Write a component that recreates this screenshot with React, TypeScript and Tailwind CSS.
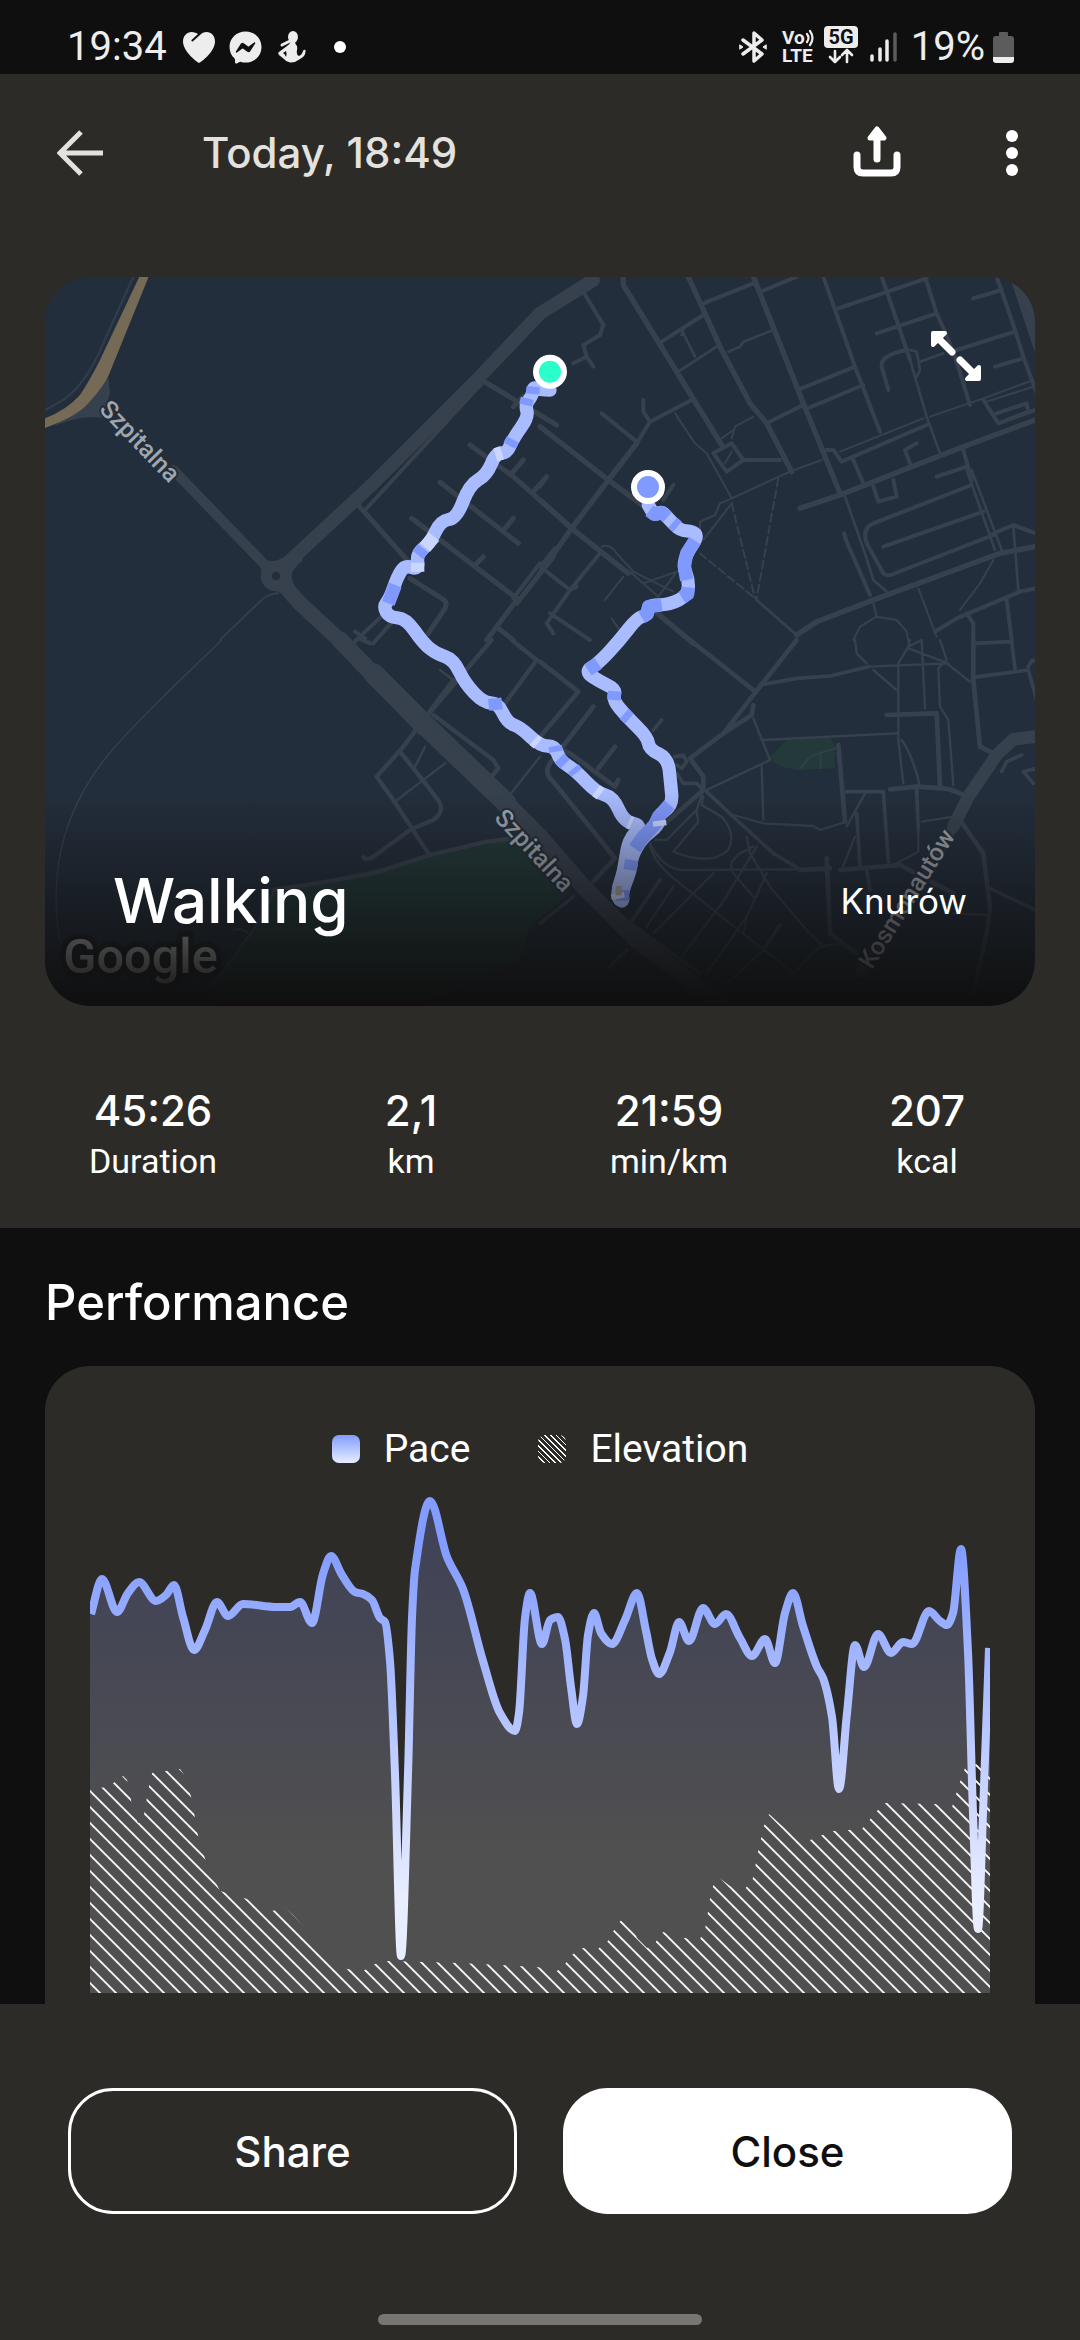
import React from 'react'
import { FaFacebookMessenger } from 'react-icons/fa6'

type Point = [number, number]

const stats = [
  { value: '45:26', label: 'Duration' },
  { value: '2,1', label: 'km' },
  { value: '21:59', label: 'min/km' },
  { value: '207', label: 'kcal' },
]

const PLOT_WIDTH = 900
const PLOT_HEIGHT = 498

const pace: Point[] = [
  [1, 119], [12, 84], [27, 117], [38, 98], [49, 87], [66, 106], [76, 100], [84, 90], [93, 122], [104, 155],
  [115, 135], [127, 107], [138, 121], [153, 109], [187, 112], [200, 112], [210, 107], [222, 128], [233, 79], [241, 61],
  [252, 80], [265, 97], [273, 99], [282, 105], [290, 123], [295, 127], [300, 166], [305, 279], [311, 461], [318, 279],
  [322, 123], [325, 75], [340, 6], [357, 62], [373, 94], [393, 166], [410, 218], [425, 236], [429, 218], [435, 123],
  [440, 98], [452, 149], [460, 125], [468, 122], [475, 144], [481, 192], [487, 229], [493, 201], [498, 140], [504, 118],
  [511, 138], [522, 149], [535, 125], [547, 98], [556, 136], [562, 164], [569, 179], [580, 157], [589, 127], [599, 146],
  [613, 113], [625, 129], [636, 119], [650, 143], [662, 161], [675, 144], [685, 168], [695, 118], [703, 98], [713, 131],
  [727, 172], [733, 183], [742, 222], [749, 294], [757, 218], [765, 150], [774, 172], [788, 139], [801, 158], [813, 147],
  [822, 149], [839, 116], [850, 126], [857, 130], [863, 118], [871, 54], [878, 157], [883, 318], [888, 434], [893, 318],
  [899, 153],
]

const elevation: Point[] = [
  [0, 294], [18, 292], [33, 281], [37, 285], [43, 315], [48, 328], [53, 326], [58, 296], [62, 278], [90, 274],
  [95, 281], [102, 305], [108, 341], [117, 370], [130, 396], [157, 404], [183, 416], [193, 411], [203, 420], [217, 435],
  [233, 452], [243, 469], [257, 474], [273, 476], [285, 469], [298, 466], [370, 468], [447, 472], [467, 476], [475, 469],
  [483, 459], [492, 453], [508, 454], [518, 446], [528, 428], [538, 420], [547, 443], [557, 453], [565, 448], [573, 437],
  [593, 443], [610, 444], [615, 435], [620, 404], [623, 391], [628, 382], [640, 391], [655, 394], [663, 383], [668, 357],
  [674, 331], [679, 319], [690, 329], [713, 348], [730, 341], [743, 336], [758, 335], [772, 334], [787, 316], [795, 308],
  [845, 309], [862, 312], [870, 287], [875, 273], [887, 269], [900, 279],
]

const route: Point[] = [
  [1530, 360], [1500, 360], [1480, 350], [1478, 375], [1455, 405], [1466, 440], [1420, 505], [1400, 550], [1368, 548],
  [1340, 615], [1288, 645], [1250, 745], [1202, 752], [1170, 820], [1130, 850], [1136, 900], [1095, 885], [1072, 920],
  [1050, 985], [1030, 1010], [1048, 1042], [1098, 1045], [1150, 1120], [1190, 1152], [1240, 1168], [1275, 1240],
  [1330, 1298], [1375, 1300], [1402, 1358], [1442, 1372], [1500, 1428], [1545, 1428], [1560, 1472], [1605, 1500],
  [1670, 1568], [1720, 1582], [1752, 1655], [1805, 1665], [1775, 1700], [1762, 1730], [1750, 1810], [1735, 1850],
  [1733, 1885], [1750, 1897], [1745, 1870], [1772, 1800], [1775, 1760], [1805, 1705], [1858, 1665], [1850, 1640],
  [1898, 1605], [1892, 1540], [1884, 1465], [1828, 1438], [1822, 1400], [1760, 1340], [1718, 1290], [1728, 1258],
  [1680, 1235], [1634, 1205], [1675, 1180], [1740, 1110], [1790, 1045], [1824, 1034], [1824, 1005], [1890, 1004],
  [1944, 975], [1946, 930], [1930, 890], [1940, 850], [1974, 800], [1958, 783], [1920, 782], [1885, 745], [1865, 724],
  [1843, 737], [1825, 705],
]

const fastSegments =
  'M1480 350L1478 372M1462 385L1457 405M1418 508L1408 527M1150 835L1134 855M1066 945L1045 1000M1364 1285L1368 1320M1545 1428L1548 1445M1558 1465L1575 1482M1610 1508L1600 1495M1770 1800L1775 1770M1748 1860L1748 1892M1784 1735L1808 1702L1843 1665L1856 1640L1888 1604M1722 1290L1724 1264M1768 1346L1752 1332M1644 1200L1674 1180M1805 1042L1822 1032L1826 1010L1865 1005M1926 983L1943 972L1945 952M1940 930L1933 890L1940 850L1965 812M1828 722L1843 733L1866 728L1882 742M1898 758L1912 770'

const slowSegments =
  'M1386 549L1366 555M1182 800L1155 832M1133 878L1133 905M1494 1420L1482 1410M1668 1562L1682 1572M1766 1656L1775 1660M1858 1652L1860 1668M1732 1870L1735 1886'

// Monotone cubic interpolation, so peaks never overshoot the samples
function smoothPath(points: Point[]) {
  const slopes = points.slice(1).map(([x, y], i) => (y - points[i][1]) / (x - points[i][0]))
  const tangents = points.map((_, i) => {
    if (i === 0) return slopes[0]
    if (i === points.length - 1) return slopes[i - 1]
    const a = slopes[i - 1]
    const b = slopes[i]
    return a * b <= 0 ? 0 : (2 * a * b) / (a + b)
  })
  let d = `M${points[0][0]} ${points[0][1]}`
  for (let i = 1; i < points.length; i++) {
    const [x0, y0] = points[i - 1]
    const [x1, y1] = points[i]
    const h = (x1 - x0) / 3
    d += `C${x0 + h} ${y0 + tangents[i - 1] * h} ${x1 - h} ${y1 - tangents[i] * h} ${x1} ${y1}`
  }
  return d
}

// Rounds the corners by running through the middle of every leg
function roundedPath(points: Point[]) {
  let d = `M${points[0][0]} ${points[0][1]}`
  for (let i = 1; i < points.length - 1; i++) {
    const [x, y] = points[i]
    const [nx, ny] = points[i + 1]
    d += `Q${x} ${y} ${(x + nx) / 2} ${(y + ny) / 2}`
  }
  const [lx, ly] = points[points.length - 1]
  return d + `L${lx} ${ly}`
}

// Streets are grouped per map tile, every entry is one stroke width
const tiles = [
  {
    origin: 'translate(-15 -21)',
    streets: [
      { width: 30, d: 'M400 600L680 890' },
      { width: 40, d: 'M720 900L1000 640L1310 330L1500 130L1660 30' },
      { width: 46, d: 'M735 950L780 1000L920 1130' },
      { width: 12, d: 'M1330 335L975 720M1045 1020L960 1100M1070 1040L1000 1120M945 1085L975 1105M1500 880L1420 985' },
      {
        width: 15,
        d: 'M950 700L1110 880M1110 925L1205 985Q1225 995 1215 1015L1165 1090M1325 330L1550 465M1420 410L1450 380M1290 525L1420 620L1590 770M1415 610L1450 570M1520 620L1480 665M1200 637L1435 820M1395 775L1420 745M1115 745L1430 985M1305 885L1330 860M1430 1000L1540 860M1430 990L1340 1110M1375 1075L1420 1110',
      },
      { width: 5, d: 'M540 1110L670 985Q690 970 715 970' },
    ],
  },
  {
    origin: 'translate(1485 -21)',
    streets: [
      {
        width: 16,
        d: 'M250 20L250 45L545 525M445 20L540 230L630 400L680 460L755 605M640 20L790 400L900 670M0 470L205 630L320 715M0 690L95 775L265 910M290 520L205 630L95 775L0 910M770 1095L830 1055L1000 990L1380 850L1485 830M780 715L900 675L1090 600L1270 530L1500 445M340 1020L460 1120',
      },
      {
        width: 12,
        d: 'M365 215L490 135M490 100L640 40M670 62L770 20M785 355L945 290M810 412L970 345M680 460L790 405M330 455L455 390M290 520L330 455L310 425L310 390M185 430L290 515M850 20L945 290L1020 485M1010 190L1190 130M895 115L1160 25M1155 20L1190 130L1215 185L1245 260L1290 405M1250 240L1425 185M1100 240Q1020 255 1025 290L1045 360M1370 20L1425 180L1450 260L1490 370M1300 85L1385 60M1365 290L1450 265M1025 20L1080 180L1110 270M130 65L190 165L180 195L130 225L140 260L160 290M140 260L100 280M400 645L370 690M180 850L90 960L20 1060L40 1090M110 950L90 960L20 905M30 1030L150 1110M20 620L0 650M0 890L45 835',
      },
      {
        width: 12,
        d: 'M860 540L880 540L905 575L1160 465M1330 390L1375 460L1485 420M1370 430L1460 400L1465 425L1400 450M940 570L970 640M1110 580L1095 540L1130 520M1190 620L1280 590M1270 540L1295 630M1000 650L1015 695L1070 680L1060 630M1295 645L1000 760Q965 775 980 820L1030 910Q1040 920 1060 912L1360 795M1030 830L1330 725M912 790L920 815L990 975M1350 795L1420 765L1500 795M1185 1085L1250 1045L1440 965L1485 955M1280 1030L1300 1060L1300 1110M1400 990L1415 1110M520 550L575 520L610 570L560 605ZM610 570L720 570',
      },
      {
        width: 8,
        d: 'M1295 600L1385 840M1280 600L1365 840M1140 275L1210 250M1110 240L1130 245L1140 300L1130 320M1110 270L1160 440L1200 550M425 180L465 260M430 180L425 195M415 305L530 230M565 245L600 230L610 215L700 180M915 680L975 850L1000 930L1040 965M1420 770L1435 960M650 990L770 1095',
      },
      {
        width: 6,
        d: 'M405 430L465 520L500 550L575 685L540 700L525 735L480 755L480 780M575 685L750 605L845 570M575 700L490 810M545 505L580 480M575 505L585 470L640 440M555 580L575 545M900 545L1150 445M1170 440L1330 385L1480 330M1340 395L1480 350M1360 870L1320 940L1260 1020M1135 955L1190 1100M1000 1000L1010 1040L1070 1050L1100 1085L1105 1115M1010 1040L960 1070L940 1110M185 830Q210 820 230 850L280 905L400 965M250 920L195 990M410 905L310 940M410 905L355 980L270 905M215 1045L235 1075',
      },
      { width: 40, d: 'M1430 20L1510 260' },
    ],
  },
  {
    origin: 'translate(-15 1089)',
    streets: [
      { width: 52, d: 'M900 0L1150 260' },
      { width: 62, d: 'M1000 100L1150 250L1400 490' },
      { width: 50, d: 'M1380 470L1500 590L1630 740L1790 900L1960 1030L2050 1100' },
      {
        width: 13,
        d: 'M1240 120L1090 320L1010 410L1060 480L1165 640M1080 335L1140 410L1190 475Q1220 510 1180 540L1110 570L1000 650Q975 665 970 650M1355 0L1150 240M1415 0L1490 60L1395 190M1180 225L1360 360L1375 385L1350 415M930 20L955 -5L990 10M700 750L830 730L1000 700L1170 645L1340 605L1420 595',
      },
      { width: 7, d: 'M1155 320L1125 380M1215 370L1065 485M1200 90L1240 120M1405 470L1500 350M700 760L640 870L515 1040M580 870Q610 860 630 885' },
      { width: 4, d: 'M545 0L400 140C250 290 150 380 90 540C50 640 35 780 62 910' },
    ],
  },
  {
    origin: 'translate(1485 1089)',
    streets: [
      { width: 38, d: 'M1500 288L1420 298L1370 345L1285 470L1240 560' },
      { width: 30, d: 'M1240 560L1100 800L960 1000' },
      {
        width: 14,
        d: 'M450 0L640 150M770 0L660 140L550 280L450 355L490 410L490 450L330 590M640 195L635 225L550 280M0 65L115 155L0 290M160 200L30 370Q10 400 40 425L225 655L150 735M0 300L90 340L225 440L235 420M175 385L225 320M1040 225L1190 220L1200 440M895 315L915 545M1050 448L1130 440L1210 445Q1250 450 1285 475M780 690L870 685M900 690L1080 675L1240 760M860 655L870 880L950 940M1300 0L1300 120L1320 320L1370 345M1260 540L1330 640L1350 800L1340 880L1300 1060',
      },
      {
        width: 11,
        d: 'M660 135L770 115L870 108L985 80M340 270L365 240M920 455L1030 455L1045 665M1130 450L1135 570M950 520L960 680M980 690L990 750M1300 10L1415 5L1425 85M1300 112L1465 90L1490 180M1465 80L1475 62L1500 60M1385 395L1400 365L1445 345M1490 385L1450 395L1480 430M1350 745L1490 812M500 455L590 540L700 640L775 685M360 720L270 850L480 1000M405 350L430 345L440 365L425 385L410 375M410 400L430 430L470 430L490 450M260 930L210 980M100 770L0 850M720 855L670 930',
      },
      {
        width: 7,
        d: 'M985 80L1220 70L1290 125M1110 0L1105 20L1075 70L1075 300L1090 430M1145 0L1155 205M1200 0L1220 60L1195 85L1200 200L1225 240L1240 435M1105 25L1225 70M1105 20L1145 0M945 0L950 40L980 70M1000 90L1070 150M665 300L1070 280M640 235L690 360M665 380L670 540M500 450L690 360M1085 300Q1120 350 1140 440M975 460L920 560M945 590L905 690M1135 570L1135 635L1070 670M580 525L670 550L820 558L840 570L920 545M490 470L485 495L545 530Q590 580 565 630Q510 680 400 635L475 545L470 515M490 450L470 510L410 570L380 600L345 600M330 610Q370 690 430 690L780 688M330 620Q350 680 420 730L620 890L700 950L760 1000L840 920L900 910M620 590L630 640L690 740L800 870L850 920M640 620L600 640Q560 670 580 700L640 770M680 700L620 830L610 880M400 740L320 860M520 700L340 880M560 770L410 970M620 830L500 1000M650 620L540 800M670 930L560 1030M1240 530L1145 545M1240 820L1340 825',
      },
    ],
  },
]

function ActivityMap() {
  return (
    <svg viewBox="0 0 2970 2187" className="block w-full h-auto" role="img" aria-label="Route map">
      <rect width="2970" height="2187" fill="#232e3c" />
      <g transform="translate(-15 1089)" fill="#23393a">
        <path d="M720 750L1160 650L1420 595L1500 660L1590 760L1470 860L1440 960L1100 1110L510 1110L520 1020L640 870L700 760Z" />
        <path d="M2190 350L2240 300L2370 290L2385 320L2385 385L2270 390Q2200 380 2190 350Z" />
      </g>
      <g fill="none" stroke="#37414e" strokeLinecap="round" strokeLinejoin="round">
        {tiles.map((tile) => (
          <g key={tile.origin} transform={tile.origin}>
            {tile.streets.map((street) => (
              <path key={street.d} d={street.d} strokeWidth={street.width} />
            ))}
          </g>
        ))}
        <g transform="translate(1485 -21)" strokeWidth="6" strokeDasharray="24 12">
          <path d="M575 700L645 985M715 625L650 985M480 850L645 985" />
        </g>
        <path transform="translate(1485 1089)" d="M780 385L810 350L885 325M842 335L842 385" stroke="#2d4247" strokeWidth="6" />
      </g>

      {/* Main road and the roundabout */}
      <g transform="translate(-15 -21)">
        <path d="M205 320L210 370L195 420L205 450Q150 425 40 468L120 410Z" fill="#37414e" />
        <path d="M280 20L190 220Q140 340 70 390L15 420" fill="none" stroke="#303c49" strokeWidth="7" />
        <path d="M298 20L326 20L205 318Q190 350 145 400Q110 440 15 474L15 445Q80 420 120 375Q150 330 180 270Z" fill="#756a56" />
        <path d="M640 845Q680 880 708 872Q745 860 770 830L790 870Q745 905 757 930Q770 975 810 1010L770 1000Q740 970 705 962Q665 955 667 915Q660 880 640 845Z" fill="#37414e" />
        <circle cx="708" cy="918" r="46" fill="#37414e" />
        <circle cx="708" cy="918" r="13" fill="#232e3c" />
      </g>

      <g
        fill="#a1a6ac"
        stroke="#232e3c"
        strokeWidth="12"
        paintOrder="stroke"
        fontSize="74"
        fontWeight="500"
        className="font-[Roboto,sans-serif]"
      >
        <text transform="translate(160 400) rotate(46)">Szpitalna</text>
        <text transform="translate(1345 1625) rotate(47)">Szpitalna</text>
        <text transform="translate(2480 2080) rotate(-58)">Kosmonautów</text>
      </g>

      <g transform="translate(-15 -21)" fill="none" strokeWidth="40">
        <path d={roundedPath(route)} stroke="#a9bcff" strokeLinecap="round" strokeLinejoin="round" />
        <path d={fastSegments} stroke="#8099ff" strokeLinejoin="round" />
        <path d={slowSegments} stroke="#cbd6ff" />
        <path d="M1736 1848L1736 1876" stroke="#a5a5a0" strokeWidth="18" />
      </g>
      <g transform="translate(-15 -21)" stroke="#ffffff" strokeWidth="18">
        <circle cx="1530" cy="305" r="42" fill="#2bfdcb" />
        <circle cx="1824" cy="651" r="42" fill="#819aff" />
      </g>

      <text
        x="55"
        y="2088"
        fontSize="146"
        fontWeight="500"
        fill="#c8c8c8"
        stroke="#151515"
        strokeOpacity="0.6"
        strokeWidth="34"
        strokeLinejoin="round"
        paintOrder="stroke"
        className="font-[Roboto,sans-serif]"
      >
        Google
      </text>
    </svg>
  )
}

function PerformanceChart() {
  const pacePath = smoothPath(pace)
  const elevationPath = elevation.map(([x, y]) => `${x} ${y}`).join('L')

  return (
    <svg
      viewBox={`0 0 ${PLOT_WIDTH} ${PLOT_HEIGHT}`}
      className="block w-full h-auto mt-[22px]"
      role="img"
      aria-label="Pace and elevation chart"
    >
      <defs>
        <linearGradient id="paceLine" gradientUnits="userSpaceOnUse" x1="0" y1="50" x2="0" y2="400">
          <stop offset="0" stopColor="#829cff" />
          <stop offset="1" stopColor="#e8edff" />
        </linearGradient>
        <linearGradient id="paceArea" gradientUnits="userSpaceOnUse" x1="0" y1="30" x2="0" y2="360">
          <stop offset="0" stopColor="#404257" />
          <stop offset="1" stopColor="#505050" />
        </linearGradient>
        <pattern id="hatch" width="16" height="16" patternUnits="userSpaceOnUse">
          <path d="M-2 6L10 18M6 -2L18 10" stroke="#ffffff" strokeWidth="1.8" />
        </pattern>
      </defs>
      <path d={`${pacePath}L900 153L900 ${PLOT_HEIGHT}L0 ${PLOT_HEIGHT}L0 119Z`} fill="url(#paceArea)" />
      <path d={`M${elevationPath}L${PLOT_WIDTH} ${PLOT_HEIGHT}L0 ${PLOT_HEIGHT}Z`} fill="url(#hatch)" />
      <path d={pacePath} fill="none" stroke="url(#paceLine)" strokeWidth="8" strokeLinejoin="round" />
    </svg>
  )
}

function StatusBar() {
  return (
    <div className="flex h-[74px] items-center justify-between bg-[#0f0f0f] pt-5 pl-[67px] pr-[66px] text-[#ededed]">
      <div className="flex items-center">
        <span className="font-[Roboto,sans-serif] text-[40px] leading-[48px]">19:34</span>
        <svg viewBox="0 0 32 31" className="ml-4 h-[31px] w-8" fill="currentColor">
          <path d="M16 31C12.500 29 0 19 0 9.500C0 4 4 0 8.500 0C11.500 0 13.500 1 15 2L8.500 8C8 8.800 9 9.800 10 9.200L17 3C18.500 1 21 0 23.500 0C28.500 0 32 4 32 9.500C32 19 20 29 16 31Z" />
        </svg>
        <FaFacebookMessenger className="ml-[14px] h-[33px] w-[33px]" />
        <svg viewBox="0 0 28 32" className="ml-4 h-8 w-7" fill="currentColor">
          <ellipse cx="15" cy="6" rx="5" ry="6" />
          <path d="M12 10L4 14" stroke="currentColor" strokeWidth="3" strokeLinecap="round" />
          <path
            fillRule="evenodd"
            d="M13 10L17 10L17.500 13Q20 15 19 19Q18 24 21 25Q24 24 25 20Q26 18 27.500 19Q28 25 22 28Q17 32 12 31.500Q8 31 6 28L1 24Q-0.500 22 1 21L9 15Q12 13 13 10ZM5 22Q7 23 8 26Q9 23 8 20Z"
          />
        </svg>
        <span className="ml-7 h-3 w-3 rounded-full bg-white" />
      </div>

      <div className="flex items-center">
        <svg viewBox="0 0 28 32" className="h-8 w-7" fill="none" stroke="currentColor" strokeWidth="3.500" strokeLinecap="round" strokeLinejoin="round">
          <path d="M4 9L23 23L15 30L15 2L23 9L4 23" />
          <path d="M1 14L4 16L1 18ZM27 14L24 16L27 18Z" fill="currentColor" strokeWidth="1" />
        </svg>
        <svg viewBox="-2 -5 36 44" className="ml-[13px] h-11 w-9" fill="currentColor">
          <g fontSize="19" fontWeight="700" className="font-[Roboto,sans-serif]">
            <text x="0" y="14">Vo</text>
            <text x="0" y="32">LTE</text>
          </g>
          <path d="M25 4Q28 8 25 12M28 1Q33 8 28 15" fill="none" stroke="currentColor" strokeWidth="2.200" strokeLinecap="round" />
        </svg>
        <svg viewBox="0 0 34 38" className="ml-2 mb-1 h-[38px] w-[34px]">
          <rect width="34" height="22" rx="4" fill="#ededed" />
          <text x="17" y="18" textAnchor="middle" fontSize="20" fontWeight="700" fill="#0f0f0f" className="font-[Roboto,sans-serif]">
            5G
          </text>
          <path d="M11 25L11 36M6 31L11 36L16 31M23 36L23 25M18 29L23 24L28 29" fill="none" stroke="#ededed" strokeWidth="2.600" strokeLinecap="round" strokeLinejoin="round" />
        </svg>
        <svg viewBox="0 0 27 30" className="ml-3 h-[30px] w-[27px]" strokeWidth="3.500" strokeLinecap="round" stroke="#ededed">
          <path d="M2 24L2 28M10 17L10 28M17 9L17 28" />
          <path d="M25 2L25 28" stroke="#5c5c5c" />
        </svg>
        <span className="ml-[14px] font-[Roboto,sans-serif] text-[40px] leading-[48px]">19%</span>
        <svg viewBox="0 0 21 31" className="ml-2 h-[31px] w-[21px]">
          <path d="M6 1Q6 0 7 0L14 0Q15 0 15 1L15 4L18 4Q21 4 21 7L21 26L0 26L0 7Q0 4 3 4L6 4Z" fill="#5c5c5c" />
          <path d="M0 25L21 25L21 28Q21 31 18 31L3 31Q0 31 0 28Z" fill="#ededed" />
        </svg>
      </div>
    </div>
  )
}

function App() {
  return (
    <div className="flex min-h-screen flex-col bg-[#0f0f0f] font-[Inter,sans-serif] text-white">
      <StatusBar />

      <section className="bg-[#2d2b28]">
        {/* Toolbar */}
        <header className="flex h-[158px] items-center pl-[57px] pr-[56px]">
          <button aria-label="Back" className="text-[#e4e2de]">
            <svg viewBox="0 0 46 46" className="h-[46px] w-[46px]" fill="none" stroke="currentColor" strokeWidth="5">
              <path d="M24 2L3 23L24 44M4 23L46 23" />
            </svg>
          </button>
          <h1 className="ml-[99px] flex-1 text-[42px] leading-[50px] font-medium text-[#e4e2de]">Today, 18:49</h1>
          <button aria-label="Export">
            <svg viewBox="0 0 48 52" className="mb-1 h-[52px] w-12" fill="none" stroke="#ffffff" strokeWidth="7" strokeLinecap="round" strokeLinejoin="round">
              <path d="M4 30L4 42Q4 48 10 48L38 48Q44 48 44 42L44 30M24 12L24 34" />
              <path d="M24 4L31 13L17 13Z" fill="#ffffff" strokeWidth="5" />
            </svg>
          </button>
          <button aria-label="More options" className="ml-[99px]">
            <svg viewBox="0 0 24 48" className="h-12 w-6" fill="#ffffff">
              <circle cx="12" cy="7" r="6" />
              <circle cx="12" cy="24" r="6" />
              <circle cx="12" cy="41" r="6" />
            </svg>
          </button>
        </header>

        {/* Map card */}
        <div className="px-[45px] pt-[45px]">
          <div className="relative overflow-hidden rounded-[45px]">
            <ActivityMap />
            <div className="absolute inset-x-0 bottom-0 flex h-[214px] items-end justify-between bg-linear-to-b from-[#0f0f0f]/0 to-[#0f0f0f] px-[68px] pb-[65px]">
              <h2 className="text-[62px] leading-[80px] font-medium">Walking</h2>
              <p className="text-[35px] leading-[80px]">Knurów</p>
            </div>
            <button aria-label="Expand map" className="absolute top-[43px] right-[43px]">
              <svg viewBox="0 0 72 72" className="h-[72px] w-[72px]" fill="#ffffff" stroke="#ffffff" strokeWidth="4" strokeLinecap="round" strokeLinejoin="round">
                <path d="M13 13L25 13L13 25ZM59 59L59 47L47 59Z" />
                <path d="M20 20L32 32M40 40L52 52" strokeWidth="7" />
              </svg>
            </button>
          </div>
        </div>

        {/* Summary */}
        <dl className="grid grid-cols-4 px-6 pt-20 pb-[42px] text-center">
          {stats.map((stat) => (
            <div key={stat.label} className="flex flex-col-reverse">
              <dt className="font-[Roboto,sans-serif] text-[34px] leading-[50px]">{stat.label}</dt>
              <dd className="text-[42px] leading-[50px] font-medium">{stat.value}</dd>
            </div>
          ))}
        </dl>
      </section>

      {/* Performance */}
      <section className="flex flex-1 flex-col px-[45px] pt-[45px]">
        <h2 className="text-[49px] leading-[60px] font-medium">Performance</h2>
        <div className="mt-[33px] flex-1 rounded-t-[45px] bg-[#2d2b28] px-[45px] pt-[59px] pb-[11px]">
          <div className="flex justify-center gap-[68px] font-[Roboto,sans-serif] text-[39px] leading-[48px]">
            <div className="flex items-center gap-6">
              <span className="h-7 w-7 rounded-[7px] bg-linear-to-b from-[#829cff] to-[#e8edff]" />
              Pace
            </div>
            <div className="flex items-center gap-6">
              <span className="h-7 w-7 rounded-[7px] bg-[repeating-linear-gradient(45deg,#ffffff_0px,#ffffff_1px,transparent_1px,transparent_4px)]" />
              Elevation
            </div>
          </div>
          <PerformanceChart />
        </div>
      </section>

      {/* Actions */}
      <footer className="bg-[#2d2b28] px-[68px] pt-[84px] pb-[15px]">
        <div className="grid grid-cols-2 gap-[46px] text-[42px] font-medium">
          <button className="h-[126px] rounded-[45px] border-3 border-white">Share</button>
          <button className="h-[126px] rounded-[45px] bg-white text-[#0f0f0f]">Close</button>
        </div>
        <div className="mx-auto mt-[100px] h-[11px] w-[324px] rounded-full bg-[#777671]" />
      </footer>
    </div>
  )
}

export default App
